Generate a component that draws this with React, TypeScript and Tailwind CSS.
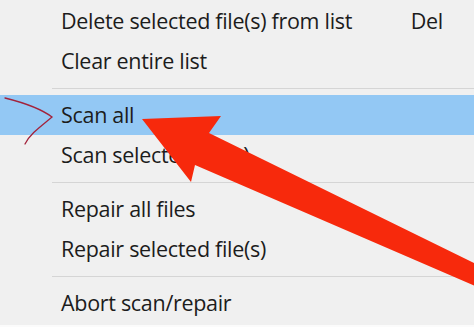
import React from "react";

const Sep = () => (
  <div className="h-[14px] flex items-center pl-[52px]">
    <div className="h-px w-full bg-[#d5d5d5]" />
  </div>
);

const Row = ({ label, shortcut, active }: { label: string; shortcut?: string; active?: boolean }) => (
  <div
    className={
      "h-[40px] flex items-center pl-[61px] pr-[31px] justify-between " +
      (active ? "bg-[#93c8f4]" : "")
    }
  >
    <span>{label}</span>
    {shortcut ? <span>{shortcut}</span> : null}
  </div>
);

export default function App() {
  return (
    <div className="relative w-[474px] h-[327px] overflow-hidden bg-[#f0f0f0] text-[#1c1c1c] text-[21.5px] tracking-[-0.3px] leading-none font-['Open_Sans',sans-serif]">
      <div className="flex flex-col pt-[1px]">
        <Row label="Delete selected file(s) from list" shortcut="Del" />
        <Row label="Clear entire list" />
        <Sep />
        <Row label="Scan all" active />
        <Row label="Scan selected file(s)" />
        <Sep />
        <Row label="Repair all files" />
        <Row label="Repair selected file(s)" />
        <Sep />
        <Row label="Abort scan/repair" />
      </div>
      <div className="absolute left-0 right-0 bottom-0 h-[2px] bg-[#fbfbfb]" />
      <svg className="absolute inset-0" width="474" height="327" viewBox="0 0 474 327">
        <path
          d="M5 98 C 25 103, 40 108, 52 117 C 40 127, 30 134, 25 144"
          fill="none"
          stroke="#a3223b"
          strokeWidth="1.3"
          strokeLinecap="round"
        />
        <polygon
          points="142,119 221,116 209,133 480,266 480,288 195,165 191,182"
          fill="#f7290c"
        />
      </svg>
    </div>
  );
}
